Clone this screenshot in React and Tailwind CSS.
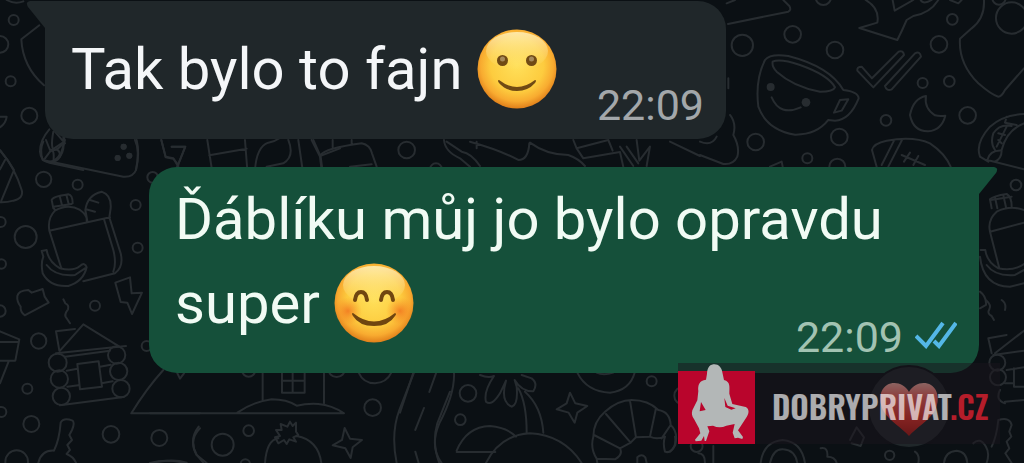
import { useId } from 'react'

const messages = [
  { id: 1, own: false, lines: ['Tak bylo to fajn'], emoji: 'smile', time: '22:09' },
  { id: 2, own: true, lines: ['Ďáblíku můj jo bylo opravdu', 'super'], emoji: 'blush', time: '22:09' },
]

// Each tile is drawn on a grid three times finer than the page
const tiles = [
  {
    id: 'top-left',
    transform: 'translate(0 0) scale(0.3333)',
    circles: [[41, 60, 15], [0, 133, 25], [32, 244, 15], [88, 347, 24]],
    paths: [
      'M118 76L64 118Q68 200 132 256',
      'M20 0Q45 14 70 4',
      'M0 350H20Q18 370 0 382',
      'M0 452Q25 480 42 510',
      'M148 388Q120 420 120 455Q122 484 148 488L250 510M160 395Q150 450 165 450Q190 440 194 410M150 455Q175 440 180 462Q172 482 148 486M150 455L135 475M165 395L195 430M190 412Q195 450 180 470',
      'M405 420Q420 450 408 510M484 420L497 470L520 475L535 500M515 440H556L530 505',
      'M622 420L636 510M628 466L740 446M735 420L742 510M765 510Q770 440 805 428Q825 425 838 415M865 420Q885 470 850 490L800 500M895 420L908 510M935 420L960 470L965 510M960 468L1020 445',
    ],
    dots: [[371, 440, 9], [353, 474, 9], [388, 467, 9]],
  },
  {
    id: 'left',
    transform: 'translate(0 140) scale(0.3333)',
    circles: [
      [131, 118, 23], [233, 134, 15], [2, 246, 15], [77, 291, 33], [407, 195, 15], [413, 323, 15],
      [4, 372, 14], [285, 497, 15], [0, 513, 17], [116, 603, 23], [82, 746, 15], [4, 816, 15],
      [94, 852, 24], [333, 883, 25], [478, 894, 24], [458, 112, 16], [440, 618, 15], [50, 965, 34],
      [173, 668, 27], [178, 717, 26], [184, 769, 26], [350, 645, 26], [356, 694, 26], [363, 746, 26],
    ],
    paths: [
      // sandwich and tent
      'M128 60Q118 30 130 5M128 60L370 110Q400 112 408 90Q420 40 410 0M128 60Q165 75 180 50L195 0M150 30Q165 25 160 68M150 30L138 0M155 30L185 10',
      'M0 30Q45 85 65 150Q72 175 40 182Q20 188 0 187M15 60L0 88M40 95L4 182',
      // backpack
      'M148 272Q142 235 165 212Q205 190 240 210Q262 225 260 243M148 272L330 232M148 272L184 385M160 205L155 180Q158 170 205 163Q218 165 218 190M165 212L160 200L215 192M180 172L186 196M200 168L206 192M256 210Q262 165 305 155Q335 165 332 205L328 232M256 210L262 243M258 208L285 215M270 180L295 188M312 238L340 330Q350 370 340 395M328 232L362 340Q372 380 345 400L250 424',
      // banana and lightning
      'M125 333L140 330Q145 365 180 385Q220 395 240 378Q255 365 260 382Q250 425 205 438Q150 442 128 400Q122 370 130 350ZM140 375Q165 410 225 405L255 385',
      'M346 428L390 412L395 460L426 458L396 522L382 488L362 486Z',
      'M52 468Q55 452 85 450L95 458L128 447L134 470L146 488L74 526Q60 515 62 500Q50 485 52 468Z',
      'M190 478L196 490Q208 495 204 508Q190 525 200 535L210 550',
      // log cabin
      'M180 632L250 553L362 622M168 640L378 618M168 574L225 567M168 574L178 632M195 650L330 632M200 692L232 686M300 680L332 674M202 740L235 736M305 730L338 724M180 796L365 772M232 672L296 664L306 740L240 748Z',
      'M0 574L58 598L46 662H0M0 606H56M26 664L0 730',
      // key
      'M182 848Q190 832 218 842Q225 850 216 870L208 885L216 900L202 915L210 930L200 942Q220 950 228 968M182 848Q178 900 162 932Q125 930 115 968',
      'M484 0L497 52L520 56L535 75M515 20H556L530 85M490 690Q440 745 394 820H600M532 700L540 716L552 700',
      'M600 865Q565 900 590 945L610 968M460 968Q520 955 560 968',
    ],
    dots: [[371, 20, 9], [353, 54, 9], [388, 47, 9]],
  },
  {
    id: 'bottom',
    transform: 'translate(150 340) scale(0.3333)',
    circles: [[218, 314, 33], [296, 272, 16], [668, 203, 25], [286, 372, 14], [296, 90, 20], [560, 85, 26]],
    paths: [
      'M0 220H582Q545 195 505 192Q470 190 440 197Q410 178 365 178Q310 185 262 218',
      'M338 90V180M522 90V190M396 90V158H464V90M428 90V158M396 122H464',
      'M146 260Q115 300 140 345L170 369M0 369Q50 355 105 369',
      'M345 369Q350 300 385 295M440 288Q505 300 514 369M385 310L375 292L390 288L378 270L395 270L392 252L412 260L420 245L428 258L438 248V275L445 285L430 292L438 305L418 298L410 312L402 300Z',
      'M584 264L600 296L636 300L608 322L602 354L586 325L548 316L576 300Z',
      'M626 98Q640 130 675 130Q710 128 724 98',
      'M792 98L748 210Q722 280 740 369M858 100L838 156M822 204L796 270M796 335L806 369M900 155L862 250Q845 310 868 369',
    ],
  },
  {
    id: 'bottom-center',
    transform: 'translate(400 340) scale(0.3333)',
    circles: [[204, 160, 25], [181, 239, 16], [755, 124, 15], [850, 167, 27], [890, 318, 18]],
    paths: [
      'M40 98L0 218M162 98Q165 160 118 250Q88 320 125 369',
      // palm
      'M240 105Q265 115 282 108Q250 155 258 185Q275 200 300 160L318 122Q300 185 335 200Q355 195 350 140L344 120Q365 155 400 154Q415 130 395 115L365 105M355 145Q380 190 380 278M375 155Q425 200 430 278',
      'M170 332Q200 260 270 258Q320 262 348 290M170 336H286M258 369Q300 285 390 280Q490 285 545 369',
      'M510 158L526 190L562 198L532 218L524 248L506 218L470 208L500 190Z',
      'M532 98Q560 155 630 158Q690 150 704 98M590 98Q610 108 640 98',
      // croissant
      'M580 290Q580 245 615 215Q655 180 695 180Q745 180 775 210Q810 215 812 255Q835 275 826 315Q812 342 795 335Q788 310 795 290Q770 300 750 290L708 292L692 308L660 325Q670 345 645 358L590 356Q570 325 580 290ZM690 182L708 292M618 222L692 308M582 285L660 325M768 205L750 290M812 255L785 295M590 356L592 369',
      'M712 369V352Q725 340 736 352L740 369',
    ],
  },
  {
    id: 'bottom-right',
    transform: 'translate(670 340) scale(0.3333)',
    circles: [[659, 346, 14], [982, 68, 24], [984, 112, 24]],
    paths: [
      'M0 335Q20 320 15 290M130 318V369M85 340Q105 340 105 369',
      'M272 369Q280 305 338 300Q395 305 405 369M300 369Q310 325 340 328Q375 330 382 369',
      'M452 325Q475 320 472 350Q495 350 500 369M540 300L560 262L582 292L572 318L545 310',
      'M735 335Q750 345 745 369M822 369Q825 335 860 332Q890 335 892 369M910 310Q930 290 948 320Q960 340 950 369',
      'M985 240Q1020 230 1025 255L1018 275L1024 290L1010 305L1018 325L1006 340L1025 369M985 240Q980 290 965 320',
      'M970 45L1062 32M1010 90L1062 82M1005 185L1062 180M1032 85V140H1062M1005 130H1032M990 150Q975 180 1005 190M955 -5L1010 -15M955 -5L965 40M975 40L1062 -28',
      'M950 -118Q965 -105 958 -92Q950 -80 965 -72L972 -60',
    ],
  },
  {
    id: 'top-right',
    transform: 'translate(700 0) scale(0.3333)',
    circles: [
      [127, 136, 32], [278, 103, 25], [405, 150, 25], [757, 58, 16], [717, 133, 25], [668, 249, 15],
      [748, 244, 16], [558, 361, 16], [803, 346, 25], [418, 411, 25], [167, 426, 25], [322, 475, 15],
      [412, 500, 24], [935, 54, 47], [370, -8, 23], [897, -6, 20], [948, 555, 16],
    ],
    paths: [
      'M84 72L265 35Q275 30 268 18L250 0M80 10L105 0',
      // cup
      'M195 180Q210 160 265 168Q390 200 430 270Q475 275 476 295Q450 360 405 362L385 360Q350 405 285 404Q200 390 175 320Q165 240 195 180ZM218 185Q240 175 300 195Q385 225 405 262Q400 275 360 275Q280 260 230 215Q215 200 218 185ZM420 300L445 298L425 332L402 338ZM215 292Q240 350 302 322',
      // double tick
      'M472 212Q470 200 485 200L516 235L596 155Q610 150 612 165L520 262ZM555 258L645 160Q660 152 663 170L575 268Q560 275 555 258Z',
      'M497 0Q540 25 532 68L478 84L592 120Q605 95 620 60L640 48Q690 40 715 0M578 0L584 32L640 0M662 0Q670 15 695 0',
      'M852 0Q855 55 815 85L780 116Q775 190 835 250Q875 285 895 290Q905 290 915 270L972 205',
      'M678 288Q640 295 630 345Q640 395 685 394Q725 390 736 347Q720 350 705 346Q672 325 678 288Z',
      'M530 500L516 450Q520 430 560 422Q640 408 690 430Q735 460 752 500M582 422L545 495M606 420L565 500M605 465L675 495M630 458L612 485M655 468L640 495',
      'M840 470Q825 430 870 380Q910 345 972 342M862 480L972 508M885 450Q870 430 880 400Q900 370 935 378M890 440Q910 400 920 380M905 450Q920 390 972 370M862 480Q870 450 905 452Q905 475 885 485M840 470L865 485M920 350L915 368L950 375M895 400L915 405M895 420L905 430',
      'M90 345Q110 370 100 405Q120 440 112 470Q100 495 70 492L0 465M0 425Q35 440 50 410M210 500L245 485L248 500M85 235V265M872 600L935 590',
      'M750 0L775 10L785 0',
    ],
    dots: [[212, 261, 12], [318, 307, 13]],
  },
  {
    id: 'between',
    transform: 'translate(300 130) scale(0.3333)',
    circles: [[320, 60, 25], [408, 118, 18]],
    paths: [
      'M40 30L62 80L66 110M62 75Q75 55 185 40Q210 45 216 70L230 110M98 30V52M155 30V42M150 110L215 103',
      'M432 30Q435 65 480 85L510 110M440 35L485 65Q515 70 540 108M510 35Q600 60 655 90Q685 90 688 40M530 35V55M690 38Q740 75 805 75Q835 85 855 108',
      'M820 30L830 55L850 85L960 66L970 110M830 55L925 30M925 30L938 62M960 50L1000 108M980 50L1015 100M1010 30L1018 92L1050 50L1040 108',
      'M1110 35L1200 78',
    ],
  },
  {
    id: 'right',
    transform: 'translate(940 160) scale(0.3333)',
    circles: [],
    paths: [
      'M150 215Q142 180 170 155Q210 135 252 150M150 215L252 188M150 215L178 325M155 145L150 118Q160 108 200 102Q215 110 215 140M165 112L172 145M190 106L198 142M122 270H136Q140 305 175 325Q220 335 252 312M120 290Q130 380 210 380L252 370M120 395Q140 410 138 435L120 445M185 420Q200 430 195 450M140 315Q165 350 225 345L252 330',
    ],
  },
]

function Wallpaper() {
  return (
    <svg
      aria-hidden="true"
      viewBox="0 0 1024 463"
      preserveAspectRatio="xMinYMin slice"
      className="absolute inset-0 h-full w-full text-[#272c30]"
      fill="none"
      stroke="currentColor"
      strokeWidth="6"
      strokeLinejoin="round"
      strokeLinecap="round"
    >
      {tiles.map((tile) => (
        <g key={tile.id} transform={tile.transform}>
          {tile.paths.map((d) => <path key={d} d={d} />)}
          {tile.circles.map(([x, y, r]) => <circle key={`${x}-${y}`} cx={x} cy={y} r={r} />)}
          {tile.dots?.map(([x, y, r]) => (
            <circle key={`${x}-${y}`} cx={x} cy={y} r={r} fill="currentColor" stroke="none" />
          ))}
        </g>
      ))}
    </svg>
  )
}

function Emoji({ kind }) {
  const id = useId()
  const blush = kind === 'blush'

  return (
    <svg
      role="img"
      aria-label={kind}
      viewBox="0 0 80 80"
      className="inline-block size-20 align-[-20px]"
    >
      <defs>
        <radialGradient id={`${id}face`} cx="0.5" cy="0.45" r="0.56">
          <stop offset="0" stopColor="#ffe05a" />
          <stop offset="0.6" stopColor="#fdcc3f" />
          <stop offset="0.82" stopColor="#f8ab30" />
          <stop offset="1" stopColor="#dd7a18" />
        </radialGradient>
        <linearGradient id={`${id}shine`} x1="0" y1="0" x2="0" y2="1">
          <stop offset="0" stopColor="#fff3c4" stopOpacity="0.8" />
          <stop offset="1" stopColor="#ffe98a" stopOpacity="0" />
        </linearGradient>
        <radialGradient id={`${id}cheek`}>
          <stop offset="0" stopColor="#f06a1c" stopOpacity="0.75" />
          <stop offset="1" stopColor="#f58a22" stopOpacity="0" />
        </radialGradient>
      </defs>
      <circle cx="40" cy="40" r="39.5" fill={`url(#${id}face)`} />
      <ellipse cx="40" cy="22" rx="31" ry="19" fill={`url(#${id}shine)`} />
      {blush ? (
        <>
          <circle cx="14" cy="48" r="14" fill={`url(#${id}cheek)`} />
          <circle cx="66" cy="48" r="14" fill={`url(#${id}cheek)`} />
          <g fill="none" stroke="#704510" strokeWidth="4" strokeLinecap="round">
            <path d="M21 37Q22 29 27 29Q32 29 33 37" />
            <path d="M47 37Q48 29 53 29Q58 29 59 37" />
          </g>
          <path d="M19 50Q40 67 61 50Q63 51 61 53Q55 63 40 63Q25 63 19 53Q17 50 19 50Z" fill="#704510" />
        </>
      ) : (
        <>
          <circle cx="25.500" cy="31.500" r="5.500" fill="#704a14" />
          <circle cx="54.500" cy="31.500" r="5.500" fill="#704a14" />
          <circle cx="25.500" cy="30" r="2.500" fill="#a58a5c" />
          <circle cx="54.500" cy="30" r="2.500" fill="#a58a5c" />
          <path d="M22 51Q40 65 58 51Q60 51 58 54Q51 62 40 62Q29 62 22 54Q20 51 22 51Z" fill="#704a14" />
        </>
      )}
    </svg>
  )
}

function ReadTicks() {
  return (
    <svg
      role="img"
      aria-label="Read"
      viewBox="0 0 42 28"
      className="mb-3 h-7 w-[42px]"
      fill="none"
      stroke="#54b7e6"
      strokeWidth="4"
    >
      <path d="M1 15L11 25L28 2" />
      <path d="M19 20L24 25L41 2" />
    </svg>
  )
}

function Reaction() {
  return (
    <button
      type="button"
      aria-label="Reactions"
      className="absolute right-7 -bottom-[76px] flex size-[84px] items-center justify-center rounded-full border-2 border-[#0b1014] bg-[#20272a]"
    >
      <svg viewBox="0 0 60 54" className="mt-1 h-[54px] w-[60px]">
        <defs>
          <linearGradient id="heart" x1="0" y1="0" x2="0" y2="1">
            <stop offset="0" stopColor="#ffb3a6" />
            <stop offset="0.25" stopColor="#ff6a62" />
            <stop offset="0.65" stopColor="#f0342a" />
            <stop offset="1" stopColor="#b81a14" />
          </linearGradient>
        </defs>
        <path d="M30 10C25 1 15-1 8 3C-1 9 0 22 5 30C11 39 23 46 30 54C37 46 49 39 55 30C60 22 61 9 52 3C45-1 35 1 30 10Z" fill="url(#heart)" />
      </svg>
    </button>
  )
}

function Bubble({ message }) {
  const { own, lines, emoji, time } = message
  const lastLine = lines[lines.length - 1]

  return (
    <article
      className={
        own
          ? 'relative mr-[45px] ml-[149px] rounded-[28px] rounded-tr-none bg-[#15503a] pt-[10px] pr-[22px] pb-3 pl-[26px] text-[#f1fbf4]'
          : 'relative ml-[45px] w-fit rounded-[28px] rounded-tl-none bg-[#20272a] pt-[26px] pr-[22px] pb-3 pl-[26px] text-[#f4f6f8]'
      }
    >
      {own ? (
        <svg aria-hidden="true" viewBox="0 0 20 28" className="absolute top-0 -right-[19px] h-7 w-5">
          <path d="M0 0H16Q21 1 18 6L1 27H0Z" fill="#15503a" />
        </svg>
      ) : (
        <svg aria-hidden="true" viewBox="0 0 20 28" className="absolute top-0 -left-[19px] h-7 w-5">
          <path d="M20 0H4Q-1 1 2 6L19 27H20Z" fill="#20272a" />
        </svg>
      )}

      {lines.slice(0, -1).map((line) => (
        <p key={line} className="text-[58px] leading-[84px]">{line}</p>
      ))}
      <div className="flex items-end justify-between gap-10">
        <p className="pb-4 text-[58px] leading-[84px] whitespace-nowrap">
          {lastLine} <Emoji kind={emoji} />
        </p>
        <div className="flex items-end gap-3">
          <time className={own ? 'text-[43px] leading-[48px] text-[#a2c3b2]' : 'text-[43px] leading-[44px] text-[#a3a7aa]'}>
            {time}
          </time>
          {own && <ReadTicks />}
        </div>
      </div>

      {own && <Reaction />}
    </article>
  )
}

function Watermark() {
  return (
    <a
      href="#"
      className="absolute right-6 bottom-[19px] flex h-[81px] w-[322px] items-end bg-[#1a141b]/50"
    >
      <span className="relative h-[73px] w-[77px] bg-[#b9052c]">
        <svg aria-hidden="true" viewBox="0 0 231 243" className="absolute bottom-0 left-0 h-[81px] w-[77px]">
          <path
            d="M106 4C92 6 88 18 87 32L84 50C64 52 59 66 61 84L58 112L43 142C40 152 42 160 48 168L63 196L67 211L51 230L53 235L70 233L78 219L80 234L84 234L94 205L88 190L105 188Q125 198 145 188L170 183L164 209L170 226L180 224L193 228L195 222L180 202L185 194L206 162C214 150 214 138 203 132L163 123L154 92C154 72 158 56 138 51L133 28C131 12 120 2 106 4ZM69 117L83 141L65 145ZM139 105L149 128L173 136L160 140L142 132Z"
            fill="#b3b7b7"
            fillRule="evenodd"
          />
        </svg>
      </span>
      <span className="mb-2 ml-[17px] font-['Oswald','Roboto_Condensed','Liberation_Sans_Narrow','Liberation_Sans',sans-serif] text-[32px] leading-[60px] font-semibold text-white/65">
        DOBRYPRIVAT<span className="text-[#b51d2a]">.CZ</span>
      </span>
    </a>
  )
}

export default function App() {
  return (
    <main className="relative min-h-screen overflow-hidden bg-[#0b1014] font-['Roboto','Noto_Sans',sans-serif]">
      <Wallpaper />
      <div className="flex flex-col gap-7 pt-px">
        {messages.map((message) => <Bubble key={message.id} message={message} />)}
      </div>
      <Watermark />
    </main>
  )
}
